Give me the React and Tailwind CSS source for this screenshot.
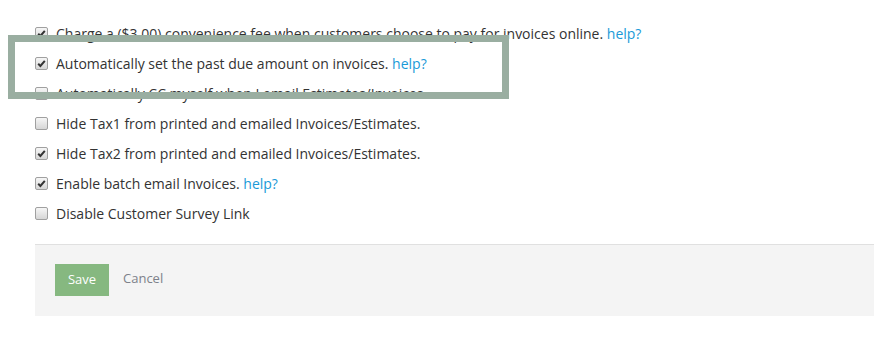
import React from 'react';

const rows = [
  { label: 'Charge a ($3.00) convenience fee when customers choose to pay for invoices online.', checked: true, help: true },
  { label: 'Automatically set the past due amount on invoices.', checked: true, help: true },
  { label: 'Automatically CC myself when I email Estimates/Invoices.', checked: false },
  { label: 'Hide Tax1 from printed and emailed Invoices/Estimates.', checked: false },
  { label: 'Hide Tax2 from printed and emailed Invoices/Estimates.', checked: true },
  { label: 'Enable batch email Invoices.', checked: true, help: true },
  { label: 'Disable Customer Survey Link', checked: false },
];

const Box = ({ checked }) => (
  <span className="flex h-[13px] w-[13px] shrink-0 items-center justify-center rounded-[2px] border border-[#a0a0a0] bg-gradient-to-b from-[#f6f6f6] to-[#d6d6d6]">
    {checked && (
      <svg width="9" height="9" viewBox="0 0 9 9">
        <path d="M1.2 4.8 L3.4 7 L7.8 1.8" fill="none" stroke="#333" strokeWidth="2" />
      </svg>
    )}
  </span>
);

export default function App() {
  return (
    <div className="relative h-[342px] w-[874px] overflow-hidden bg-white font-['Open_Sans',sans-serif] text-[14px] text-[#333]">
      <div className="flex flex-col pl-[35px] pt-[18px]">
        {rows.map((r) => (
          <div key={r.label} className="flex h-[30px] items-center gap-[8px]">
            <Box checked={r.checked} />
            <span>
              {r.label}
              {r.help && <span className="text-[#1a9ad8]"> help?</span>}
            </span>
          </div>
        ))}
      </div>

      <div className="mt-[16px] ml-[35px] h-[72px] border-t border-[#e0e0e0] bg-[#f4f4f4] pl-[20px] pt-[19px]">
        <div className="flex items-center gap-[14px]">
          <button className="h-[32px] w-[54px] bg-[#86b880] text-[13px] text-white">Save</button>
          <span className="pb-[3px] text-[13px] text-[#7d818a]">Cancel</span>
        </div>
      </div>

      <div className="absolute left-[8px] top-[35px] h-[64px] w-[501px] border-[7px] border-[#9aaea1]" />
    </div>
  );
}
